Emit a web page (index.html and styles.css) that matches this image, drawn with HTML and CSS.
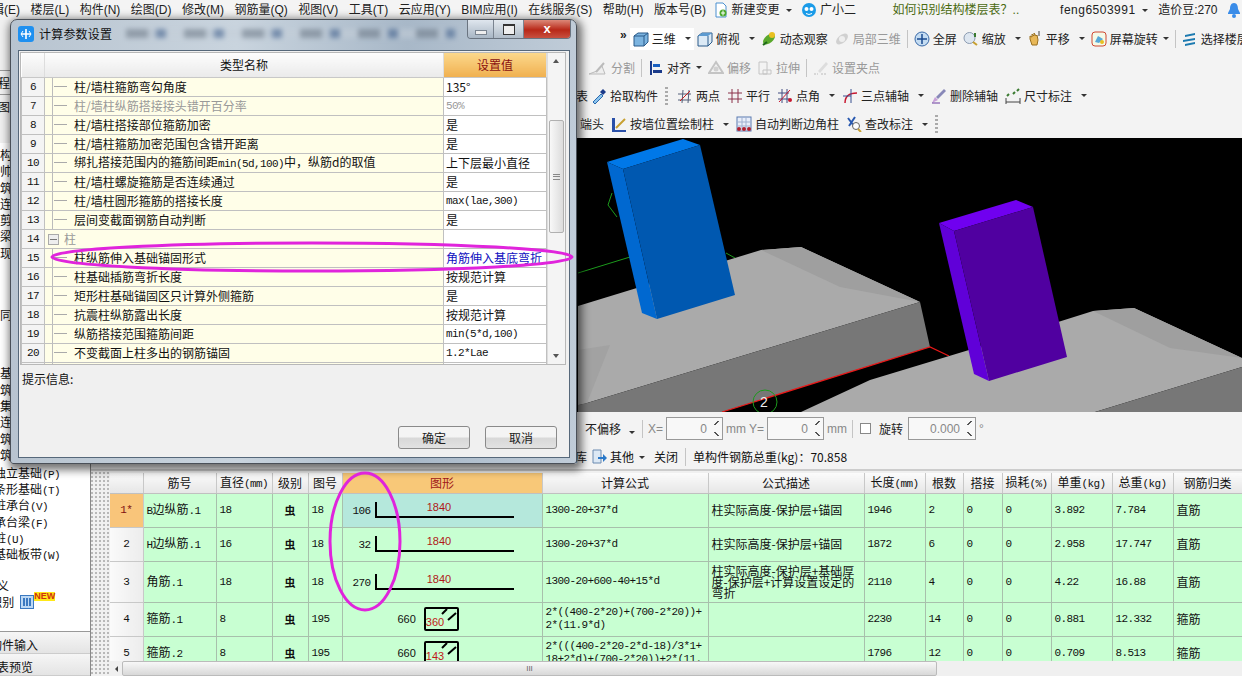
FILE: index.html
```html
<!DOCTYPE html>
<html lang="zh">
<head>
<meta charset="utf-8">
<title>计算参数设置</title>
<link rel="stylesheet" href="styles.css">
</head>
<body>
<div class="app">
  <nav class="menu">
    <span>辑(E)</span><span>楼层(L)</span><span>构件(N)</span><span>绘图(D)</span><span>修改(M)</span><span>钢筋量(Q)</span><span>视图(V)</span><span>工具(T)</span><span>云应用(Y)</span><span>BIM应用(I)</span><span>在线服务(S)</span><span>帮助(H)</span><span>版本号(B)</span>
    <span class="mi mi1"><svg class="ic" viewBox="0 0 16 16"><path d="M3 1h7l3 3v11H3z" fill="#fff" stroke="#4a90d0"/><circle cx="10" cy="11" r="3.5" fill="#4ca82c"/><path d="M10 8.5v5M8 11h4" stroke="#fff"/></svg>新建变更<i class="car"></i></span>
    <span class="mi mi2"><svg class="ic" viewBox="0 0 16 16"><circle cx="8" cy="8" r="7" fill="#1a9be8"/><circle cx="5.5" cy="7" r="2" fill="#fff"/><circle cx="10.5" cy="7" r="2" fill="#fff"/><path d="M5 11.5q3 2 6 0" stroke="#fff" fill="none"/></svg>广小二</span>
    <span class="hint">如何识别结构楼层表？..</span>
    <span class="user">feng6503991<i class="car"></i></span>
    <span>造价豆:270</span>
    <svg class="ic bell" viewBox="0 0 16 16"><path d="M8 1c3 0 4 3 4 6l2 4v1H2v-1l2-4c0-3 1-6 4-6z" fill="#3a8ce8"/><circle cx="8" cy="14" r="2" fill="#3a8ce8"/></svg>
  </nav>
  <div class="body">
    <aside class="side">
      <div class="side-tabs"><div class="stab">工程</div><div class="stab">绘图</div></div>
      <ul class="list upper">
        <li>构</li><li>帅</li><li>筑</li><li>连</li><li>剪</li><li>梁</li><li>现浇</li>
        <li class="skip">同</li>
        <li class="skip2">基</li><li>筑</li><li>集</li><li>连</li><li>筑</li><li>筑</li>
      </ul>
      <ul class="list lower">
        <li>独立基础<span class="m">(P)</span></li><li>条形基础<span class="m">(T)</span></li><li>桩承台<span class="m">(V)</span></li><li>承台梁<span class="m">(F)</span></li><li>桩<span class="m">(U)</span></li><li>基础板带<span class="m">(W)</span></li>
        <li class="def">自定义</li>
        <li class="cad">CAD识别 <svg class="cad-ic" viewBox="0 0 14 14"><rect x=".5" y=".5" width="13" height="13" fill="#bcd8f4" stroke="#3a78c0"/><path d="M3 3h2v8H3zM6 3h2v8H6zM9 3h2v8H9z" fill="#3a78c0"/></svg><b class="new">NEW</b></li>
      </ul>
      <div class="sfoot f1">构件输入</div>
      <div class="sfoot f2">报表预览</div>
    </aside>
    <main class="main">
      <div class="trow r1">
        <span class="more">»</span>
        <span class="t w1"><svg class="ic" viewBox="0 0 16 16"><path d="M1 5l4-3h10v9l-4 4H1z" fill="#7cb4e0" stroke="#2a5a8a"/><path d="M1 5h10v10M11 5l4-3" fill="none" stroke="#2a5a8a"/></svg>三维<i class="car"></i></span>
        <span class="t"><svg class="ic" viewBox="0 0 16 16"><path d="M1 5l4-3h10v9l-4 4H1z" fill="#dceaf6" stroke="#2a5a8a"/><path d="M1 5l4-3h10l-4 3z" fill="#5c9ad0"/><path d="M11 5v10" stroke="#2a5a8a"/></svg>俯视<i class="car"></i></span>
        <span class="t"><svg class="ic" viewBox="0 0 16 16"><ellipse cx="8" cy="8" rx="7" ry="4" transform="rotate(-40 8 8)" fill="#5aa82c"/><circle cx="11" cy="4" r="3" fill="#e8c020"/><path d="M2 14l4-3" stroke="#1e6a18" stroke-width="2"/></svg>动态观察</span>
        <span class="t off"><svg class="ic" viewBox="0 0 16 16"><ellipse cx="8" cy="8" rx="7" ry="4" transform="rotate(-40 8 8)" fill="#d0d0d0"/><circle cx="8" cy="8" r="3" fill="#eee"/></svg>局部三维</span>
        <i class="sep"></i>
        <span class="t"><svg class="ic" viewBox="0 0 16 16"><circle cx="8" cy="8" r="7" fill="#c4dcf2" stroke="#3a6aa8"/><path d="M8 3v10M3 8h10" stroke="#1a4a90" stroke-width="1.5"/></svg>全屏</span>
        <span class="t"><svg class="ic" viewBox="0 0 16 16"><circle cx="6.5" cy="7" r="5.5" fill="#dde6f0" stroke="#8a9ab0"/><path d="M10 11l4 3" stroke="#c8a030" stroke-width="2"/><path d="M12 2v4" stroke="#3a7a30" stroke-width="2"/></svg>缩放<i class="car"></i></span>
        <span class="t"><svg class="ic" viewBox="0 0 16 16"><path d="M3 8V5l2 1V3l2 2V2l2 3 1-1 1 5-1 5H5z" fill="#e8b858" stroke="#9a7020"/><path d="M12 0v5" stroke="#444"/></svg>平移<i class="car"></i></span>
        <span class="t"><svg class="ic" viewBox="0 0 16 16"><rect x="1" y="1" width="14" height="14" rx="3" fill="#f4fae8" stroke="#d04830"/><path d="M4 11l3-6 5 3-4 4z" fill="#58a8d8"/><circle cx="11" cy="11" r="2" fill="#e8c020"/></svg>屏幕旋转<i class="car tight"></i></span>
        <i class="sep"></i>
        <span class="t"><svg class="ic" viewBox="0 0 16 16"><path d="M3 4l10-2v2L3 6zM1 9l12-2v2L1 11zM3 13l10-2v2L3 15z" fill="#1c7ab0"/></svg>选择楼层</span>
      </div>
      <div class="trow r2">
        <span class="t off"><svg class="ic wide" viewBox="0 0 20 16"><path d="M1 14h16l-3-8-5 5z" fill="#eee" stroke="#bbb"/><path d="M8 12l8-9" stroke="#bbb" stroke-width="2"/></svg>分割</span>
        <i class="sep"></i>
        <span class="t"><svg class="ic" viewBox="0 0 16 16"><path d="M3 1v14" stroke="#1a3a8a" stroke-width="2"/><path d="M5 4h7v3H5z" fill="#1a60c0"/><path d="M5 10h9v3H5z" fill="#1a3a8a"/></svg>对齐<i class="car tight"></i></span>
        <span class="t off"><svg class="ic" viewBox="0 0 16 16"><path d="M1 13l7-11 7 11z" fill="none" stroke="#c4c4c4" stroke-width="2"/><circle cx="8" cy="9" r="2.5" fill="#d0d0d0"/></svg>偏移</span>
        <span class="t off"><svg class="ic" viewBox="0 0 16 16"><path d="M2 2h8v12H2zM6 10h8v4H6z" fill="none" stroke="#c4c4c4"/></svg>拉伸</span>
        <i class="sep"></i>
        <span class="t off"><svg class="ic" viewBox="0 0 16 16"><path d="M1 14h4M8 14h5" stroke="#bbb" stroke-dasharray="2 1"/><path d="M5 11l8-9 2 2-8 9z" fill="#ddd"/></svg>设置夹点</span>
      </div>
      <div class="trow r3">
        <span class="frag">表</span>
        <span class="t pick"><svg class="ic" viewBox="0 0 16 16"><path d="M2 14l8-8 2 2-8 8z" fill="#8cc4ec" stroke="#2a6ab0"/><path d="M9 4l3-3 3 3-3 3z" fill="#1a3a8a"/></svg>拾取构件</span>
        <i class="grip"></i>
        <span class="t"><svg class="ic" viewBox="0 0 16 16"><path d="M1 6h13M1 12h13M5 15L6 2M11 15l1-13" stroke="#55607a" fill="none"/><path d="M3 13L13 3" stroke="#c82020"/></svg>两点</span>
        <span class="t"><svg class="ic" viewBox="0 0 16 16"><path d="M1 5h14M1 11h14M5 1v14M11 1v14" stroke="#8a3048" fill="none"/></svg>平行</span>
        <span class="t"><svg class="ic" viewBox="0 0 16 16"><path d="M1 5h11M1 11h11M5 1v14M10 1v14" stroke="#404a80" fill="none"/><path d="M2 14L13 2" stroke="#c81830"/><circle cx="13" cy="12" r="2" fill="#c81830"/></svg>点角<i class="car"></i></span>
        <span class="t"><svg class="ic" viewBox="0 0 16 16"><path d="M3 15C3 8 7 5 15 5" fill="none" stroke="#c81830" stroke-width="1.5"/><path d="M9 1v14M1 8h8" stroke="#385090"/></svg>三点辅轴<i class="car"></i></span>
        <span class="t"><svg class="ic" viewBox="0 0 16 16"><path d="M1 15l3-6 3 3z" fill="#c8a0d8"/><path d="M5 9l8-8 2 2-8 8z" fill="#8888b8"/><path d="M1 15h8" stroke="#6a3aa0"/></svg>删除辅轴</span>
        <span class="t"><svg class="ic" viewBox="0 0 16 16"><path d="M1 14h14M1 10v6M15 10v6" stroke="#444" fill="none"/><path d="M2 8l2-2M8 6l2-2M12 3l2-2" stroke="#3a7a30" stroke-width="2"/></svg>尺寸标注<i class="car"></i></span>
      </div>
      <div class="trow r4">
        <span class="frag">端头</span>
        <span class="t"><svg class="ic" viewBox="0 0 16 16"><path d="M1 2h3v12h11v2H1z" fill="#2a50a8"/><path d="M5 12L14 3" stroke="#c8a030" stroke-width="2"/></svg>按墙位置绘制柱<i class="car"></i></span>
        <span class="t"><svg class="ic" viewBox="0 0 16 16"><rect x="1" y="1" width="14" height="14" fill="#e8eefa" stroke="#5a7ab0"/><path d="M1 6h14M1 10h14M6 1v14M10 1v14" stroke="#a0b0d0"/><circle cx="3" cy="13" r="2" fill="#b02030"/><circle cx="8" cy="13" r="2" fill="#b02030"/><circle cx="13" cy="13" r="2" fill="#b02030"/></svg>自动判断边角柱</span>
        <span class="t"><svg class="ic" viewBox="0 0 16 16"><path d="M2 2l6 8M9 1L3 10" stroke="#2a5ab0" stroke-width="2"/><circle cx="10" cy="10" r="3.5" fill="#fff" stroke="#666"/><path d="M12 13l3 3" stroke="#c8a030" stroke-width="2"/></svg>查改标注<i class="car"></i></span>
        <i class="grip"></i>
      </div>
      <div class="view">
        <svg class="scene" viewBox="91 138 1151 274" preserveAspectRatio="none">
          <rect x="91" y="138" width="1151" height="274" fill="#000"/>
          <path d="M578 273L630 257M726 253L735 258" stroke="#1c9a1c" fill="none"/>
          <path d="M612 193L608 205L617 217" stroke="#1c9a1c" fill="none"/>
          <path d="M578 306L761 250L801 247L920 302L587 403L578 405z" fill="#aaa"/>
          <path d="M761 250L801 247L920 302L840 287z" fill="#9f9f9f"/>
          <path d="M578 350L610 345L587 403L578 405z" fill="#a2a2a2"/>
          <path d="M920 302L930 347L722 412H578V405L587 403z" fill="#777"/>
          <path d="M722 412L930 347L949 356" stroke="#e81818" stroke-width="1.2" fill="none"/>
          <path d="M801 412L870 380L969 350L1093 311L1134 308L1242 358V367L1095 412z" fill="#aaa"/>
          <path d="M1093 311L1134 308L1242 358L1170 348z" fill="#9f9f9f"/>
          <path d="M1242 367L1095 412H1242z" fill="#777"/>
          <circle cx="765" cy="402" r="12" fill="none" stroke="#1c9a1c"/>
          <text class="axis" x="760" y="407">2</text>
          <path d="M607 162L683 139L700 145L623 169z" fill="#0078e8"/>
          <path d="M607 162L623 169L657 319L642 313z" fill="#0068d0"/>
          <path d="M623 169L700 145L735 295L657 319z" fill="#0058b0"/>
          <path d="M939 223L1016 200L1033 207L954 231z" fill="#7000f0"/>
          <path d="M939 223L954 231L989 381L974 374z" fill="#6000d8"/>
          <path d="M954 231L1033 207L1067 357L989 381z" fill="#5000a0"/>
        </svg>
      </div>
      <div class="bar b1">
        <span class="sel">不偏移<i class="car"></i></span><i class="sep"></i>
        <span class="lb">X=</span><span class="num"><em>0</em><i class="spin"></i></span><span class="lb">mm</span>
        <span class="lb">Y=</span><span class="num"><em>0</em><i class="spin"></i></span><span class="lb">mm</span><i class="sep"></i>
        <i class="chk"></i><span class="rot">旋转</span><span class="num long"><em>0.000</em><i class="spin"></i></span><span class="lb">°</span>
      </div>
      <div class="bar b2">
        <span class="frag ku">库</span>
        <span class="t"><svg class="ic" viewBox="0 0 16 16"><path d="M2 1h8v13H2z" fill="#dce8f4" stroke="#6a8ab0"/><path d="M7 8h5V5l4 4-4 4v-3H7z" fill="#2a78c8"/></svg>其他<i class="car tight"></i></span>
        <span class="t close">关闭</span><i class="sep"></i>
        <span class="t">单构件钢筋总重(kg)：70.858</span>
      </div>
      <div class="grid-wrap">
        <div class="gutter"></div>
        <div class="grid-col">
          <div class="grid-clip">
            <table class="grid">
              <colgroup><col class="c0"><col class="c1"><col class="c2"><col class="c3"><col class="c4"><col class="c5"><col class="c6"><col class="c7"><col class="c8"><col class="c9"><col class="c10"><col class="c11"><col class="c12"><col class="c13"><col class="c14"></colgroup>
              <thead><tr><th></th><th>筋号</th><th>直径<span class="m">(mm)</span></th><th>级别</th><th>图号</th><th class="hot">图形</th><th>计算公式</th><th>公式描述</th><th>长度<span class="m">(mm)</span></th><th>根数</th><th>搭接</th><th>损耗<span class="m">(%)</span></th><th>单重<span class="m">(kg)</span></th><th>总重<span class="m">(kg)</span></th><th>钢筋归类</th></tr></thead>
              <tbody>
                <tr class="h34"><td class="rh cur m">1*</td><td><span class="m">B</span>边纵筋<span class="m">.1</span></td><td class="m dia">18</td><td class="gr">虫</td><td class="m">18</td><td class="shape selc"><div class="rb"><span class="rbn">106</span><div class="hook"><span>1840</span></div></div></td><td class="m f">1300-20+37*d</td><td>柱实际高度-保护层+锚固</td><td class="m">1946</td><td class="m">2</td><td class="m">0</td><td class="m">0</td><td class="m">3.892</td><td class="m">7.784</td><td>直筋</td></tr>
                <tr class="h34"><td class="rh m">2</td><td><span class="m">H</span>边纵筋<span class="m">.1</span></td><td class="m dia">16</td><td class="gr">虫</td><td class="m">18</td><td class="shape"><div class="rb"><span class="rbn">32</span><div class="hook"><span>1840</span></div></div></td><td class="m f">1300-20+37*d</td><td>柱实际高度-保护层+锚固</td><td class="m">1872</td><td class="m">6</td><td class="m">0</td><td class="m">0</td><td class="m">2.958</td><td class="m">17.747</td><td>直筋</td></tr>
                <tr class="h41"><td class="rh m">3</td><td>角筋<span class="m">.1</span></td><td class="m dia">18</td><td class="gr">虫</td><td class="m">18</td><td class="shape"><div class="rb"><span class="rbn">270</span><div class="hook"><span>1840</span></div></div></td><td class="m f">1300-20+600-40+15*d</td><td class="tight-cell">柱实际高度-保护层+基础厚度-保护层+计算设置设定的弯折</td><td class="m">2110</td><td class="m">4</td><td class="m">0</td><td class="m">0</td><td class="m">4.22</td><td class="m">16.88</td><td>直筋</td></tr>
                <tr class="h34"><td class="rh m">4</td><td>箍筋<span class="m">.1</span></td><td class="m dia">8</td><td class="gr">虫</td><td class="m">195</td><td class="shape"><div class="st"><span class="stn">660</span><div class="box"><span>360</span><svg viewBox="0 0 33 22"><path d="M32 4L24 11M23 0L18 5" stroke="#000" stroke-width="2"/></svg></div></div></td><td class="m f two">2*((400-2*20)+(700-2*20))+<br>2*(11.9*d)</td><td></td><td class="m">2230</td><td class="m">14</td><td class="m">0</td><td class="m">0</td><td class="m">0.881</td><td class="m">12.332</td><td>箍筋</td></tr>
                <tr class="h34"><td class="rh m">5</td><td>箍筋<span class="m">.2</span></td><td class="m dia">8</td><td class="gr">虫</td><td class="m">195</td><td class="shape"><div class="st"><span class="stn">660</span><div class="box"><span>143</span><svg viewBox="0 0 33 22"><path d="M32 4L24 11M23 0L18 5" stroke="#000" stroke-width="2"/></svg></div></div></td><td class="m f two">2*(((400-2*20-2*d-18)/3*1+<br>18+2*d)+(700-2*20))+2*(11.</td><td></td><td class="m">1796</td><td class="m">12</td><td class="m">0</td><td class="m">0</td><td class="m">0.709</td><td class="m">8.513</td><td>箍筋</td></tr>
              </tbody>
            </table>
          </div>
          <div class="hscroll"><i class="arrow-l"></i><div class="thumb"><span>III</span></div></div>
        </div>
      </div>
    </main>
  </div>

  <section class="dlg">
    <header class="dlg-title">
      <svg class="dlg-ic" viewBox="0 0 16 16"><rect width="16" height="16" rx="3" fill="#1e90f0"/><path d="M8 3v10M3 8h10" stroke="#fff" stroke-width="1.6"/><path d="M5 5L3 8l2 3M11 5l2 3-2 3" fill="none" stroke="#fff"/></svg>
      <span class="dlg-name">计算参数设置</span>
      <i class="ghost"></i>
      <div class="wbtns"><i class="wb wmin"></i><i class="wb wmax"></i><i class="wb wclose">x</i></div>
    </header>
    <div class="client">
      <div class="pframe">
        <div class="ptable-clip">
          <table class="pt">
            <colgroup><col class="p0"><col class="p1"><col class="p2"></colgroup>
            <thead><tr><th></th><th>类型名称</th><th class="phot">设置值</th></tr></thead>
            <tbody>
              <tr><td class="n">6</td><td class="nm">柱/墙柱箍筋弯勾角度</td><td class="v">135°</td></tr>
              <tr class="dim"><td class="n">7</td><td class="nm">柱/墙柱纵筋搭接接头错开百分率</td><td class="v vm">50%</td></tr>
              <tr><td class="n">8</td><td class="nm">柱/墙柱搭接部位箍筋加密</td><td class="v">是</td></tr>
              <tr><td class="n">9</td><td class="nm">柱/墙柱箍筋加密范围包含错开距离</td><td class="v">是</td></tr>
              <tr><td class="n">10</td><td class="nm">绑扎搭接范围内的箍筋间距<span class="m">min(5d,100)</span>中，纵筋d的取值</td><td class="v">上下层最小直径</td></tr>
              <tr><td class="n">11</td><td class="nm">柱/墙柱螺旋箍筋是否连续通过</td><td class="v">是</td></tr>
              <tr><td class="n">12</td><td class="nm">柱/墙柱圆形箍筋的搭接长度</td><td class="v vm">max(lae,300)</td></tr>
              <tr><td class="n">13</td><td class="nm">层间变截面钢筋自动判断</td><td class="v">是</td></tr>
              <tr class="dim"><td class="n">14</td><td class="grp"><i class="minus"></i>柱</td><td class="v"></td></tr>
              <tr><td class="n">15</td><td class="nm">柱纵筋伸入基础锚固形式</td><td class="v blue">角筋伸入基底弯折</td></tr>
              <tr><td class="n">16</td><td class="nm">柱基础插筋弯折长度</td><td class="v">按规范计算</td></tr>
              <tr><td class="n">17</td><td class="nm">矩形柱基础锚固区只计算外侧箍筋</td><td class="v">是</td></tr>
              <tr><td class="n">18</td><td class="nm">抗震柱纵筋露出长度</td><td class="v">按规范计算</td></tr>
              <tr><td class="n">19</td><td class="nm">纵筋搭接范围箍筋间距</td><td class="v vm">min(5*d,100)</td></tr>
              <tr><td class="n">20</td><td class="nm">不变截面上柱多出的钢筋锚固</td><td class="v vm">1.2*Lae</td></tr>
              <tr><td class="n"></td><td class="nm"></td><td class="v"></td></tr>
            </tbody>
          </table>
        </div>
        <div class="vscroll"><i class="arrow-u"></i><div class="vthumb"><span></span></div><i class="arrow-d"></i></div>
      </div>
      <div class="tip">提示信息:</div>
      <div class="actions"><button class="btn">确定</button><button class="btn">取消</button></div>
    </div>
  </section>

  <svg class="marks" viewBox="0 0 1242 676">
    <ellipse cx="312" cy="257" rx="260" ry="14" />
    <ellipse cx="365" cy="541.5" rx="35" ry="68.5" />
  </svg>
</div>
</body>
</html>
```
FILE: styles.css
```css
* { box-sizing: border-box; }
html, body { margin: 0; padding: 0; }
body { width: 1242px; height: 676px; overflow: hidden; background: #f0f0f0; color: #111; font: 12px/16px "Noto Sans CJK SC", "Liberation Sans", sans-serif; }
i, em { font-style: normal; }
ul { list-style: none; margin: 0; padding: 0; }
.app { position: relative; width: 1242px; height: 676px; overflow: hidden; display: flex; flex-direction: column; }
.m { font-family: "Liberation Mono", "Noto Sans CJK SC", monospace; font-size: 11px; letter-spacing: -.6px; }

.menu { height: 20px; flex: none; display: flex; align-items: center; gap: 10.5px; margin-left: -8px; white-space: nowrap; background: #f4f4f4; font-family: "Liberation Sans", "Noto Sans CJK SC", sans-serif; color: #222; }
.menu > span { display: inline-flex; align-items: center; }
.ic { width: 16px; height: 16px; flex: none; }
.ic.wide { width: 20px; }
.mi .ic { margin-right: 3px; }
.menu .mi1 { margin-left: -4px; }
.menu .mi2 { margin-left: -1px; }
.menu .hint { margin-left: 26px; color: #4a6a10; width: 178px; }
.menu .user { letter-spacing: .5px; }
.bell { margin-left: -2px; }
.car { display: inline-block; width: 0; height: 0; margin-left: 6px; border: 3px solid transparent; border-top: 3px solid #333; border-bottom: 0; }
.car.tight { margin-left: 2px; }

.body { flex: 1; display: flex; min-height: 0; }
.side { width: 91px; flex: none; display: flex; flex-direction: column; background: #f0f0f0; border-right: 1px solid #888; overflow: hidden; }
.side-tabs { margin-top: 50px; }
.stab { height: 24px; line-height: 24px; margin-left: -14px; border-top: 1px solid #999; white-space: nowrap; }
.list li { white-space: nowrap; }
.upper { height: 322px; flex: none; margin-top: 25px; background: #fff; padding-top: 4px; font-size: 12px; }
.upper li { height: 16.3px; line-height: 16px; }
.upper .skip { margin-top: 46px; }
.upper .skip2 { margin-top: 42px; }
.lower { flex: 1; background: #fff; border-bottom: 1px solid #999; }
.lower li { height: 16.2px; line-height: 16px; margin-left: -6px; }
.lower .def { margin: 16px 0 0 -27px; }
.lower .cad { margin: 0 0 0 -33px; display: flex; align-items: center; }
.cad-ic { width: 14px; height: 14px; margin-left: 6px; }
.new { color: #d03010; background: #ffe818; font: bold 9px/9px "Liberation Sans", sans-serif; align-self: flex-start; margin-top: -2px; }
.sfoot { height: 22px; line-height: 25px; background: linear-gradient(#f6f6f6, #e4e4e4); border-bottom: 1px solid #ccc; white-space: nowrap; font-size: 12px; flex: none; }
.f1 { margin-left: -10px; }
.f2 { margin-left: -15px; }

.main { flex: 1; min-width: 0; display: flex; flex-direction: column; }
.trow { flex: none; display: flex; align-items: center; white-space: nowrap; background: #f3f3f3; color: #222; overflow: hidden; }
.r1 { height: 32px; padding: 5px 0 0 529px; gap: 6px; }
.r2 { height: 31px; padding-left: 497px; gap: 6px; }
.r3 { height: 27px; padding: 0 0 2px 485px; gap: 7px; }
.r4 { height: 28px; padding-left: 489px; gap: 7px; }
.t { display: inline-flex; align-items: center; gap: 3px; flex: none; }
.t.off { color: #999; }
.w1 { background: #fff; box-shadow: 0 0 0 3px #fff; }
.pick { margin-left: -4px; }
.r3 .grip { margin-right: 2px; }
.more { font: bold 12px/12px "Liberation Sans", sans-serif; width: 8px; margin-top: -8px; }
.frag { flex: none; color: #222; }
.ku { margin-right: -3px; }
.close { margin-left: 2px; }
.sep { flex: none; width: 1px; height: 18px; background: #c4c4c4; }
.grip { flex: none; width: 3px; height: 18px; background: repeating-linear-gradient(#aaa 0 2px, transparent 2px 4px); }

.view { flex: none; height: 274px; }
.scene { display: block; width: 100%; height: 274px; }
.axis { fill: #eee; font: 14px "Liberation Sans", sans-serif; }
.bar { flex: none; display: flex; align-items: center; white-space: nowrap; background: #f3f3f3; }
.b1 { height: 33px; padding-left: 494px; gap: 3px; color: #888; }
.b2 { height: 26px; padding-left: 484px; gap: 7px; border-bottom: 2px solid #ccc; }
.sel { color: #222; width: 52px; }
.sel .car { margin-left: 8px; }
.b1 .sep { margin: 0 2px 0 2px; }
.lb { flex: none; font-family: "Liberation Sans", sans-serif; font-size: 12px; }
.num { display: flex; align-items: center; justify-content: flex-end; width: 57px; height: 23px; border: 1px solid #999; background: #f8f8f8; font-family: "Liberation Sans", sans-serif; color: #888; padding-right: 2px; }
.num.long { width: 68px; }
.num em { margin-right: 6px; }
.spin { width: 7px; height: 15px; background: linear-gradient(135deg, transparent 45%, #555 45% 55%, transparent 55%) 0 0/7px 4px no-repeat, linear-gradient(45deg, transparent 45%, #555 45% 55%, transparent 55%) 0 11px/7px 4px no-repeat; }
.chk { width: 11px; height: 11px; border: 1px solid #888; background: #fff; margin: 0 5px 0 2px; }
.rot { color: #222; margin-right: 2px; }

.grid-wrap { flex: 1; min-height: 0; display: flex; background: #f0f0f0; }
.gutter { width: 19px; flex: none; background: radial-gradient(#b8b8b8 1px, transparent 1.4px) 3px 0/4px 4px; }
.grid-col { flex: 1; min-width: 0; display: flex; flex-direction: column; padding-top: 2px; }
.grid-clip { height: 188px; overflow: hidden; background: #f0f0f0; }
.grid { border-collapse: collapse; table-layout: fixed; width: 1132px; }
.c0 { width: 33px; } .c1 { width: 73px; } .c2 { width: 56px; } .c3 { width: 36px; } .c4 { width: 34px; } .c5 { width: 200px; } .c6 { width: 166px; } .c7 { width: 156px; } .c8 { width: 61px; } .c9 { width: 38px; } .c10 { width: 39px; } .c11 { width: 49px; } .c12 { width: 61px; } .c13 { width: 61px; } .c14 { width: 69px; }
.grid th { height: 20px; padding: 0; font-weight: 400; text-align: center; background: linear-gradient(#fbfbfb, #e6e6e6); border-right: 1px solid #c8c8c8; border-bottom: 1px solid #c0c0c0; white-space: nowrap; overflow: hidden; }
.grid th.hot { background: #f8c878; color: #a01818; }
.grid td { padding: 0 0 0 3px; background: #c8ffd2; border: 1px solid #a8c0ac; border-top: 0; border-left: 0; white-space: nowrap; overflow: hidden; vertical-align: middle; }
.h34 td { height: 34px; }
.h41 td { height: 41px; }
.grid td.rh { padding: 0; text-align: center; background: linear-gradient(90deg, #fafafa, #ececec); border-color: #c8c8c8; }
.grid td.cur { background: #f9c57a; color: #801010; }
.grid td.dia { border-left: 1px solid #111; }
.grid td.f { line-height: 13px; }
.grid td.gr { padding: 0; text-align: center; font-size: 11px; font-weight: 700; }
.grid td.tight-cell { white-space: normal; line-height: 11px; }
.grid td.shape { padding: 0; }
.grid td.selc { background: #b5e8dc; }
.rb { display: flex; align-items: flex-end; height: 16px; }
.rbn { width: 28px; text-align: right; font: 11px/14px "Liberation Mono", monospace; letter-spacing: -.6px; margin-right: 4px; }
.hook { width: 139px; height: 16px; padding-right: 12px; border-left: 2px solid #000; border-bottom: 2px solid #000; text-align: center; color: #b01818; font: 11px/10px "Liberation Sans", sans-serif; }
.st { display: flex; align-items: center; padding-left: 55px; }
.stn { font: 11px/16px "Liberation Sans", sans-serif; margin-right: 8px; }
.box { position: relative; width: 35px; height: 24px; border: 2px solid #000; border-radius: 2px; color: #c01818; font: 11px/16px "Liberation Sans", sans-serif; padding-top: 6px; }
.box span { display: block; line-height: 14px; }
.box svg { position: absolute; right: 0; top: 0; width: 33px; height: 22px; }
.hscroll { height: 15px; flex: none; display: flex; align-items: center; background: #f0f0f0; }
.arrow-l { width: 12px; flex: none; }
.arrow-l::before { content: ""; display: block; margin-left: 5px; width: 0; height: 0; border: 3px solid transparent; border-right: 3px solid #444; border-left: 0; }
.thumb { width: 815px; height: 15px; background: linear-gradient(#f8f8f8, #d8d8d8); border: 1px solid #bbb; border-radius: 2px; text-align: center; font: 8px/13px "Liberation Sans", sans-serif; color: #666; }

.dlg { position: absolute; left: 10px; top: 19px; width: 567px; height: 445px; display: flex; flex-direction: column; border: 1px solid #4a5058; border-radius: 7px 7px 3px 3px; background: linear-gradient(90deg, #b8c4d0, #c9d4de 40%, #a8b8c8 70%, #c0ccd8); box-shadow: 2px 3px 9px 3px rgba(0,0,0,.55); }
.dlg-title { height: 30px; flex: none; display: flex; align-items: flex-start; }
.dlg-ic { width: 16px; height: 16px; margin: 6px 0 0 7px; }
.dlg-name { margin: 5px 0 0 5px; line-height: 18px; letter-spacing: 0.2px; color: #111; }
.ghost { flex: 1; height: 9px; margin: 9px 12px 0 14px; opacity: .55; filter: blur(2.5px); background: repeating-linear-gradient(90deg, #6a7684 0 22px, #b8c4d0 22px 30px, #3a5a88 30px 40px, #c4ced8 40px 58px); }
.wbtns { margin-right: 5px; display: flex; height: 19px; border: 1px solid #6a7480; border-top: 0; border-radius: 0 0 4px 4px; overflow: hidden; }
.wb { display: flex; align-items: center; justify-content: center; height: 18px; }
.wmin { width: 26px; background: linear-gradient(#dfe6ee, #a8b6c4); border-right: 1px solid #7a8490; }
.wmin::before { content: ""; width: 10px; height: 3px; background: #eee; border: 1px solid #7a8490; margin-top: 6px; }
.wmax { width: 30px; background: linear-gradient(#e4eaf0, #b0bcc8); border-right: 1px solid #7a8490; }
.wmax::before { content: ""; width: 10px; height: 8px; border: 1px solid #333; border-top-width: 2px; background: #eee; }
.wclose { width: 46px; background: linear-gradient(#dc8878, #b82818 55%, #c85040); color: #fff; font: bold 13px/16px "Liberation Sans", sans-serif; }
.client { flex: 1; margin: 0 6px 5px 7px; display: flex; flex-direction: column; background: #f0f0f0; border: 1px solid #56687a; padding: 1px 3px 0 1px; min-height: 0; }
.pframe { height: 313px; flex: none; display: flex; border: 1px solid #b8b8b8; background: #fff; }
.ptable-clip { width: 526px; overflow: hidden; }
.pt { border-collapse: collapse; table-layout: fixed; width: 525px; }
.p0 { width: 23px; } .p1 { width: 399px; } .p2 { width: 103px; }
.pt th { height: 24px; padding: 0; font-weight: 400; text-align: center; background: linear-gradient(#fdfdfd, #eaeaea); border-right: 1px solid #ddd; border-bottom: 1px solid #c8c8c8; }
.pt th.phot { background: linear-gradient(#fbd88c, #f0b050); color: #8a1010; }
.pt td { height: 19px; padding: 0; border: 1px solid #c0c0c0; border-top: 0; white-space: nowrap; overflow: hidden; line-height: 16px; }
.pt .n { text-align: center; background: #f4f4f4; font: 11px/16px "Liberation Mono", monospace; letter-spacing: -.6px; }
.pt .nm { padding-left: 29px; background: linear-gradient(#bbb, #bbb) 7px 0/1px 100% no-repeat, linear-gradient(#aaa, #aaa) 9px 50%/13px 1px no-repeat, #fffee8; }
.pt .grp { padding-left: 3px; background: #fffee8; }
.minus { display: inline-block; width: 11px; height: 11px; margin-right: 5px; vertical-align: -1px; border: 1px solid #aaa; background: linear-gradient(#777, #777) 50% 50%/7px 1px no-repeat, #eee; }
.pt .v { padding-left: 2px; background: #fff; }
.pt .vm { font: 11px/16px "Liberation Mono", monospace; letter-spacing: -.6px; }
.pt .blue { color: #1010c0; }
.pt .dim td { color: #999; }
.pt .dim td.n { color: #222; }
.vscroll { flex: 1; display: flex; flex-direction: column; position: relative; background: #f4f4f4; border-left: 1px solid #ddd; }
.arrow-u, .arrow-d { display: block; width: 0; height: 0; margin-left: 5px; border: 3px solid transparent; }
.arrow-u { margin-top: 6px; border-bottom: 4px solid #555; border-top: 0; }
.arrow-d { margin-top: 121px; border-top: 4px solid #555; border-bottom: 0; }
.vthumb { height: 113px; margin: 57px 1px 0; flex: none; display: flex; align-items: center; justify-content: center; border: 1px solid #b0b0b0; border-radius: 2px; background: linear-gradient(90deg, #f8f8f8, #dcdcdc); }
.vthumb span { width: 7px; height: 6px; border-top: 1px solid #888; border-bottom: 1px solid #888; background: linear-gradient(#888, #888) 0 50%/100% 1px no-repeat; }
.tip { flex: 1; padding: 6px 0 0 2px; line-height: 16px; }
.actions { flex: none; display: flex; justify-content: flex-end; gap: 15px; padding: 0 9px 8px 0; }
.btn { width: 72px; height: 23px; padding: 0; font: 12px/16px "Noto Sans CJK SC", sans-serif; color: #222; background: linear-gradient(#f4f4f4 45%, #d8d8d8 55%, #e2e2e2); border: 1px solid #8a8a8a; border-radius: 3px; }

.marks { position: absolute; left: 0; top: 0; width: 1242px; height: 676px; pointer-events: none; }
.marks ellipse { fill: none; stroke: #e024dc; stroke-width: 3; }
```
